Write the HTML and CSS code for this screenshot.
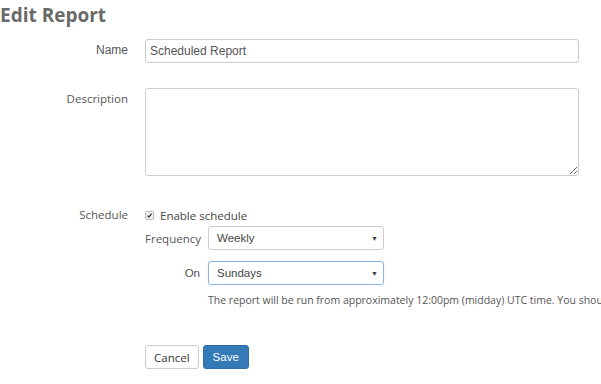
FILE: index.html
```html
<!DOCTYPE html>
<html>
<head>
<meta charset="utf-8">
<link rel="stylesheet" href="styles.css">
</head>
<body>
<h1 class="title">Edit Report</h1>
<form class="form">
  <div class="row row-name">
    <label class="label arial">Name</label>
    <div class="control"><input class="input arial" type="text" value="Scheduled Report"></div>
  </div>
  <div class="row row-desc">
    <label class="label">Description</label>
    <div class="control"><textarea class="textarea"></textarea></div>
  </div>
  <div class="row row-sched">
    <label class="label">Schedule</label>
    <div class="control">
      <div class="check"><span class="box"><svg width="9" height="9" viewBox="0 0 9 9"><path d="M2 4.6 L3.8 6.6 L7.2 2.2" fill="none" stroke="#333" stroke-width="1.6"/></svg></span><span>Enable schedule</span></div>
      <div class="sub">
        <span class="sublabel">Frequency</span>
        <div class="select arial"><span>Weekly</span><span class="caret">▼</span></div>
        <span class="sublabel arial">On</span>
        <div class="select focus arial"><span>Sundays</span><span class="caret">▼</span></div>
        <span></span>
        <p class="help">The report will be run from approximately 12:00pm (midday) UTC time. You shou</p>
      </div>
    </div>
  </div>
  <div class="row row-btn">
    <span></span>
    <div class="buttons">
      <button type="button" class="btn btn-cancel">Cancel</button>
      <button type="button" class="btn btn-save arial">Save</button>
    </div>
  </div>
</form>
</body>
</html>
```
FILE: styles.css
```css
html, body { margin: 0; padding: 0; background: #fff; overflow: hidden; }
body { font-family: "Open Sans", sans-serif; color: #333; width: 601px; height: 384px; }
.arial { font-family: "Liberation Sans", Arial, sans-serif; }
.title { margin: 0; padding: 0; font-size: 19px; font-weight: 700; color: #6a6a6a; line-height: 30px; height: 30px; }
.form { display: flex; flex-direction: column; }
.row { display: grid; grid-template-columns: 128px 434px; column-gap: 17px; }
.label { text-align: right; font-size: 11.5px; color: #555; }
.row-name { margin-top: 8px; height: 50px; }
.row-name .label { line-height: 24px; font-size: 12px; }
.input { box-sizing: border-box; width: 434px; height: 24px; border: 1px solid #ccc; border-radius: 3px; padding: 0 4px; font-size: 12px; color: #555; outline: none; }
.row-desc .label { padding-top: 3px; line-height: 16px; }
.textarea { box-sizing: border-box; display: block; width: 434px; height: 88px; border: 1px solid #ccc; border-radius: 3px; resize: both; font-family: inherit; margin: 0; }
.row-sched { margin-top: 28px; }
.row-sched .label { line-height: 16px; padding-top: 3px; }
.check { display: flex; align-items: center; height: 16px; margin-top: 3px; font-size: 11.5px; color: #444; gap: 6px; }
.box { box-sizing: border-box; width: 9px; height: 9px; border: 1px solid #bbb; border-radius: 2px; background: #f0f0f0; display: flex; align-items: center; justify-content: center; }
.box svg { display: block; }
.sub { display: grid; grid-template-columns: 55px 176px; column-gap: 8px; row-gap: 11px; margin-top: 3px; align-items: center; }
.sublabel { text-align: right; font-size: 11.5px; color: #555; }
.select { box-sizing: border-box; height: 24px; border: 1px solid #ccc; border-radius: 3px; display: flex; align-items: center; justify-content: space-between; padding: 0 5px 0 8px; font-size: 11.5px; color: #444; }
.select.focus { border-color: #8ab4e8; box-shadow: 0 0 1px rgba(102,175,233,.5); }
.caret { font-size: 7px; color: #444; }
.help { margin: -4px 0 0; grid-column: 2 / 3; white-space: nowrap; font-size: 10.5px; color: #555; line-height: 16px; }
.row-btn { margin-top: 37px; }
.buttons { display: flex; gap: 4px; }
.btn { box-sizing: border-box; height: 24px; border-radius: 3px; font-size: 11.5px; padding: 0 8px; margin: 0; cursor: pointer; }
.btn-cancel { border: 1px solid #ccc; background: #fff; color: #333; font-family: "Open Sans", sans-serif; }
.btn-save { border: 1px solid #2e6da4; background: #337ab7; color: #fff; padding: 0 9px; font-size: 11.5px; }
```
